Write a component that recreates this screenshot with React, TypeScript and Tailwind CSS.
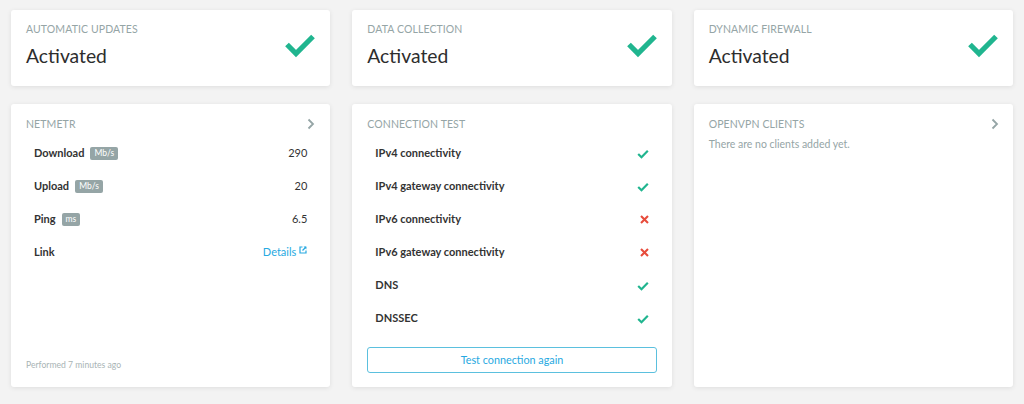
import React from "react";

const font = { fontFamily: "Lato, 'Noto Sans', sans-serif" };

function BigCheck() {
  return (
    <svg width="32" height="24" viewBox="0 0 32 24" className="shrink-0">
      <path d="M3 10.5 L12 19.5 L29 2.5" fill="none" stroke="#20b58f" strokeWidth="5.2" strokeLinecap="butt" strokeLinejoin="miter" />
    </svg>
  );
}

function SmallCheck() {
  return (
    <svg width="12" height="10" viewBox="0 0 12 10">
      <path d="M1.2 5 L4.5 8.2 L10.8 1.8" fill="none" stroke="#20b58f" strokeWidth="2.2" />
    </svg>
  );
}

function SmallX() {
  return (
    <svg width="9" height="9" viewBox="0 0 9 9">
      <path d="M1 1 L8 8 M8 1 L1 8" fill="none" stroke="#e74c3c" strokeWidth="2.1" />
    </svg>
  );
}

function Chevron() {
  return (
    <svg width="8" height="12" viewBox="0 0 8 12">
      <path d="M1.5 1.5 L6 6 L1.5 10.5" fill="none" stroke="#95a5a6" strokeWidth="1.8" />
    </svg>
  );
}

function ExtLink() {
  return (
    <svg width="8" height="8" viewBox="0 0 8 8" className="ml-[3px] -mt-[6px]">
      <path d="M3.5 1 H1 V7 H7 V4.5" fill="none" stroke="#27a9e1" strokeWidth="1.2" />
      <path d="M4.5 0.6 H7.4 V3.5 Z" fill="#27a9e1" />
      <path d="M7 1 L3.5 4.5" stroke="#27a9e1" strokeWidth="1.2" />
    </svg>
  );
}

function Card({ children, className = "" }: { children: React.ReactNode; className?: string }) {
  return (
    <div className={"bg-white rounded-[3px] shadow-[0_1px_5px_rgba(0,0,0,0.09)] " + className}>
      {children}
    </div>
  );
}

function Title({ children }: { children: React.ReactNode }) {
  return <div className="text-[10.5px] leading-4 uppercase tracking-[0.01em] text-[#95a5a6]">{children}</div>;
}

function StatusCard({ title }: { title: string }) {
  return (
    <Card className="h-[76px] pl-[15px] pr-[14px] pt-[11px] flex justify-between">
      <div>
        <Title>{title}</Title>
        <div className="mt-[5px] text-[19.3px] leading-7 text-[#2d2d2d]">Activated</div>
      </div>
      <div className="pt-[13px]">
        <BigCheck />
      </div>
    </Card>
  );
}

function Badge({ children }: { children: React.ReactNode }) {
  return (
    <span className="ml-[6px] inline-flex items-center h-[13px] px-[4px] rounded-[2px] bg-[#95a5a6] text-white text-[8.5px] leading-none font-normal">
      {children}
    </span>
  );
}

function Row({ label, right }: { label: React.ReactNode; right: React.ReactNode }) {
  return (
    <div className="h-[33px] flex items-center justify-between pl-[8px] pr-[8px]">
      <div className="flex items-center text-[11px] font-bold text-[#333]">{label}</div>
      <div className="flex items-center text-[11px] text-[#333]">{right}</div>
    </div>
  );
}

export default function App() {
  const tests: [string, boolean][] = [
    ["IPv4 connectivity", true],
    ["IPv4 gateway connectivity", true],
    ["IPv6 connectivity", false],
    ["IPv6 gateway connectivity", false],
    ["DNS", true],
    ["DNSSEC", true],
  ];
  return (
    <div style={font} className="w-[1024px] h-[404px] bg-[#f3f3f3] px-[11px] pt-[10px]">
      <div className="grid grid-cols-3 gap-x-[22px] gap-y-[18px] grid-rows-[76px_283px]">
        <StatusCard title="Automatic updates" />
        <StatusCard title="Data collection" />
        <StatusCard title="Dynamic firewall" />

        <Card className="px-[15px] pt-[12px] pb-[16px] flex flex-col">
          <div className="flex items-center justify-between">
            <Title>Netmetr</Title>
            <Chevron />
          </div>
          <div className="mt-[5px]">
            <Row label={<>Download<Badge>Mb/s</Badge></>} right="290" />
            <Row label={<>Upload<Badge>Mb/s</Badge></>} right="20" />
            <Row label={<>Ping<Badge>ms</Badge></>} right="6.5" />
            <Row
              label="Link"
              right={
                <span className="flex items-center text-[#27a9e1]">
                  Details
                  <ExtLink />
                </span>
              }
            />
          </div>
          <div className="mt-auto text-[8.6px] leading-3 text-[#a9b4b5]">Performed 7 minutes ago</div>
        </Card>

        <Card className="px-[15px] pt-[12px] pb-[14px] flex flex-col">
          <Title>Connection test</Title>
          <div className="mt-[5px]">
            {tests.map(([l, ok]) => (
              <Row key={l} label={l} right={ok ? <SmallCheck /> : <SmallX />} />
            ))}
          </div>
          <button className="mt-auto h-[26px] w-full rounded-[3px] border border-[#5bc0de] text-[10.8px] text-[#27a9e1] bg-white">
            Test connection again
          </button>
        </Card>

        <Card className="pl-[15px] pr-[14px] pt-[12px]">
          <div className="flex items-center justify-between">
            <Title>OpenVPN clients</Title>
            <Chevron />
          </div>
          <div className="mt-[4px] text-[10.5px] leading-4 text-[#95a5a6]">There are no clients added yet.</div>
        </Card>
      </div>
    </div>
  );
}
